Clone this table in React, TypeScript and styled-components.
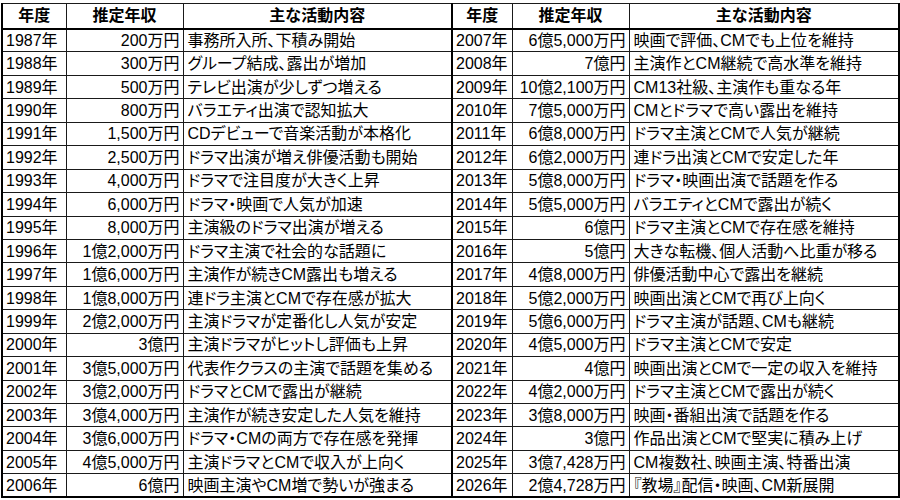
import styled, { createGlobalStyle } from 'styled-components';

type Entry = [string, string, string];

const leftRows: Entry[] = [
  ['1987年', '200万円', '事務所入所、下積み開始'],
  ['1988年', '300万円', 'グループ結成、露出が増加'],
  ['1989年', '500万円', 'テレビ出演が少しずつ増える'],
  ['1990年', '800万円', 'バラエティ出演で認知拡大'],
  ['1991年', '1,500万円', 'CDデビューで音楽活動が本格化'],
  ['1992年', '2,500万円', 'ドラマ出演が増え俳優活動も開始'],
  ['1993年', '4,000万円', 'ドラマで注目度が大きく上昇'],
  ['1994年', '6,000万円', 'ドラマ・映画で人気が加速'],
  ['1995年', '8,000万円', '主演級のドラマ出演が増える'],
  ['1996年', '1億2,000万円', 'ドラマ主演で社会的な話題に'],
  ['1997年', '1億6,000万円', '主演作が続きCM露出も増える'],
  ['1998年', '1億8,000万円', '連ドラ主演とCMで存在感が拡大'],
  ['1999年', '2億2,000万円', '主演ドラマが定番化し人気が安定'],
  ['2000年', '3億円', '主演ドラマがヒットし評価も上昇'],
  ['2001年', '3億5,000万円', '代表作クラスの主演で話題を集める'],
  ['2002年', '3億2,000万円', 'ドラマとCMで露出が継続'],
  ['2003年', '3億4,000万円', '主演作が続き安定した人気を維持'],
  ['2004年', '3億6,000万円', 'ドラマ・CMの両方で存在感を発揮'],
  ['2005年', '4億5,000万円', '主演ドラマとCMで収入が上向く'],
  ['2006年', '6億円', '映画主演やCM増で勢いが強まる'],
];

const rightRows: Entry[] = [
  ['2007年', '6億5,000万円', '映画で評価、CMでも上位を維持'],
  ['2008年', '7億円', '主演作とCM継続で高水準を維持'],
  ['2009年', '10億2,100万円', 'CM13社級、主演作も重なる年'],
  ['2010年', '7億5,000万円', 'CMとドラマで高い露出を維持'],
  ['2011年', '6億8,000万円', 'ドラマ主演とCMで人気が継続'],
  ['2012年', '6億2,000万円', '連ドラ出演とCMで安定した年'],
  ['2013年', '5億8,000万円', 'ドラマ・映画出演で話題を作る'],
  ['2014年', '5億5,000万円', 'バラエティとCMで露出が続く'],
  ['2015年', '6億円', 'ドラマ主演とCMで存在感を維持'],
  ['2016年', '5億円', '大きな転機、個人活動へ比重が移る'],
  ['2017年', '4億8,000万円', '俳優活動中心で露出を継続'],
  ['2018年', '5億2,000万円', '映画出演とCMで再び上向く'],
  ['2019年', '5億6,000万円', 'ドラマ主演が話題、CMも継続'],
  ['2020年', '4億5,000万円', 'ドラマ主演とCMで安定'],
  ['2021年', '4億円', '映画出演とCMで一定の収入を維持'],
  ['2022年', '4億2,000万円', 'ドラマ主演とCMで露出が続く'],
  ['2023年', '3億8,000万円', '映画・番組出演で話題を作る'],
  ['2024年', '3億円', '作品出演とCMで堅実に積み上げ'],
  ['2025年', '3億7,428万円', 'CM複数社、映画主演、特番出演'],
  ['2026年', '2億4,728万円', '『教場』配信・映画、CM新展開'],
];

const GlobalStyle = createGlobalStyle`
  html, body {
    margin: 0;
    padding: 0;
    background: #fff;
  }
`;

const Page = styled.div`
  width: 900px;
  height: 500px;
  padding: 3px 0 0 1px;
  box-sizing: border-box;
  overflow: hidden;
`;

const Sheet = styled.table`
  width: 897px;
  table-layout: fixed;
  border-collapse: collapse;
  border: 2px solid #000;
  border-top-width: 1px;
  font-family: 'Liberation Sans', 'Noto Sans CJK JP', sans-serif;
  font-size: 16px;
  color: #000;
`;

const Col = styled.col<{ $w: number }>`
  width: ${(p) => p.$w}px;
`;

const HeadRow = styled.tr`
  height: 25px;
  border-bottom: 2px solid #000;
`;

const BodyRow = styled.tr`
  height: 23.45px;
`;

const Cell = styled.td<{ $split?: boolean }>`
  border: 1px solid #1a1a1a;
  border-left-width: ${(p) => (p.$split ? '2px' : '1px')};
  border-left-color: ${(p) => (p.$split ? '#000' : '#1a1a1a')};
  padding: 0;
  line-height: 21px;
  white-space: nowrap;
  overflow: hidden;
  vertical-align: middle;
`;

const HeadCell = styled(Cell).attrs({ as: 'th' })`
  font-weight: bold;
  text-align: center;
`;

const YearCell = styled(Cell)`
  text-align: left;
  padding-left: 3px;
`;

const AmountCell = styled(Cell)`
  text-align: right;
  padding-right: 3px;
`;

const NoteCell = styled(Cell)`
  text-align: left;
  padding-left: 4px;
  font-feature-settings: 'palt';
`;

const App = () => {
  return (
    <Page>
      <GlobalStyle />
      <Sheet>
        <colgroup>
          <Col $w={64} />
          <Col $w={117} />
          <Col $w={269} />
          <Col $w={60} />
          <Col $w={117} />
          <Col $w={270} />
        </colgroup>
        <thead>
          <HeadRow>
            <HeadCell>年度</HeadCell>
            <HeadCell>推定年収</HeadCell>
            <HeadCell>主な活動内容</HeadCell>
            <HeadCell $split>年度</HeadCell>
            <HeadCell>推定年収</HeadCell>
            <HeadCell>主な活動内容</HeadCell>
          </HeadRow>
        </thead>
        <tbody>
          {leftRows.map((left, i) => {
            const right = rightRows[i];
            return (
              <BodyRow key={left[0]}>
                <YearCell>{left[0]}</YearCell>
                <AmountCell>{left[1]}</AmountCell>
                <NoteCell>{left[2]}</NoteCell>
                <YearCell $split>{right[0]}</YearCell>
                <AmountCell>{right[1]}</AmountCell>
                <NoteCell>{right[2]}</NoteCell>
              </BodyRow>
            );
          })}
        </tbody>
      </Sheet>
    </Page>
  );
};

export default App;
